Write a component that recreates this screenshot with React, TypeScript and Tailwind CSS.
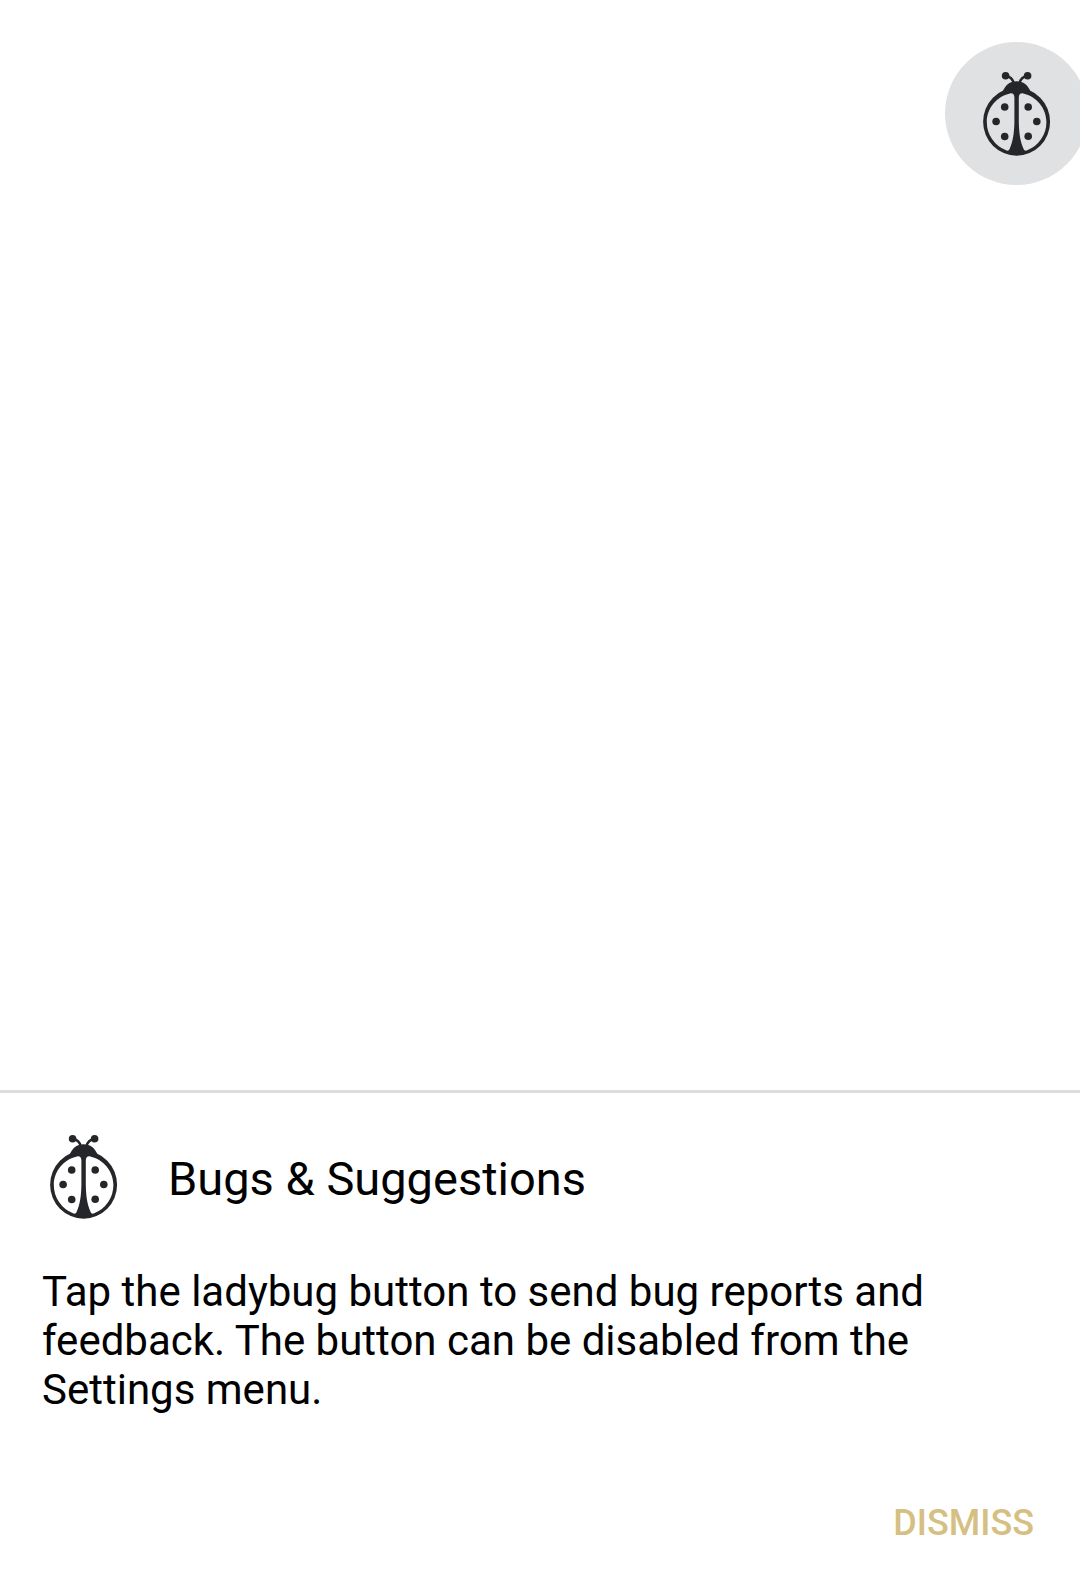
function Ladybug() {
  return (
    <svg viewBox="0 0 84 84" className="size-[84px] shrink-0 text-[#25262a]" fill="currentColor" aria-hidden="true">
      <circle cx="30.6" cy="3.8" r="3.8" />
      <circle cx="52.6" cy="3.8" r="3.8" />
      <path
        d="M31.5 4Q37 5 38.7 11M51.7 4Q46.2 5 44.5 11"
        fill="none"
        stroke="currentColor"
        strokeWidth="2.4"
      />
      <path d="M27.6 20C30 13.2 35 9.3 41.6 9.3S53.2 13.2 55.6 20Z" />
      <path
        fillRule="evenodd"
        d="M41.6 15.7A33.5 34 0 0 1 41.6 83.7A33.5 34 0 0 1 41.6 15.7Z
           M35 21.4C37.6 20.8 39.4 22.4 39.4 25.4V50C39.2 61 37.9 69.5 34.8 76.6C33.9 78.8 32.6 79.2 31 78.3A29.8 30.4 0 0 1 11.8 49.7C11.8 36.5 21.5 24.4 35 21.4Z
           M48.2 21.4C45.6 20.8 43.8 22.4 43.8 25.4V50C44 61 45.3 69.5 48.4 76.6C49.3 78.8 50.6 79.2 52.2 78.3A29.8 30.4 0 0 0 71.4 49.7C71.4 36.5 61.7 24.4 48.2 21.4Z"
      />
      <circle cx="29.7" cy="35" r="3.8" />
      <circle cx="53.2" cy="35" r="3.8" />
      <circle cx="21.1" cy="49.5" r="3.8" />
      <circle cx="61.8" cy="49.5" r="3.8" />
      <circle cx="29.7" cy="64.5" r="3.8" />
      <circle cx="53.2" cy="64.2" r="3.8" />
    </svg>
  );
}

export default function App() {
  return (
    <div className="flex min-h-screen flex-col bg-white font-['Roboto',sans-serif] text-black">
      <main className="flex flex-1 items-start justify-end overflow-hidden pt-[42px]">
        <button
          type="button"
          aria-label="Send bug report or feedback"
          className="-mr-2 flex size-[143px] items-center justify-center rounded-full bg-[#e0e1e3]"
        >
          <Ladybug />
        </button>
      </main>
      <section aria-labelledby="sheet-title" className="border-t-3 border-[#dddddd] px-[42px] pt-[42px] pb-[39px]">
        <div className="flex items-center gap-[42px]">
          <Ladybug />
          <h1 id="sheet-title" className="pt-1 text-[47px] leading-14">
            Bugs &amp; Suggestions
          </h1>
        </div>
        <p className="mt-12 text-[42px] leading-[49px]">
          Tap the ladybug button to send bug reports and feedback. The button can be disabled from the Settings menu.
        </p>
        <div className="mt-[87px] flex justify-end">
          <button type="button" className="px-1 text-[36px] leading-11 font-medium text-[#d5bf83]">
            DISMISS
          </button>
        </div>
      </section>
    </div>
  );
}
